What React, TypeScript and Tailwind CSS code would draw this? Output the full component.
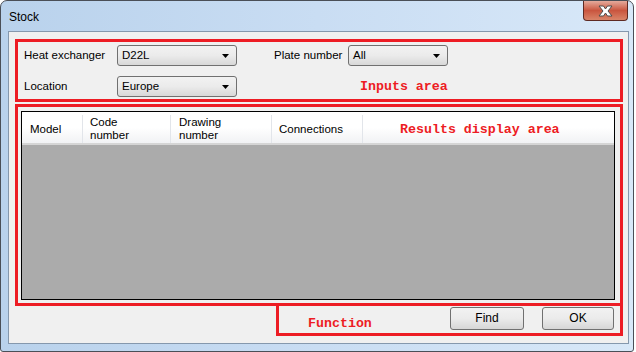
const ui = { fontFamily: '"Liberation Sans", Arial, sans-serif' }
const mono = { fontFamily: '"Liberation Mono", "Courier New", monospace' }

function Combo({ value, width }: { value: string; width: string }) {
  return (
    <div
      className={`${width} h-[21px] flex items-center justify-between rounded-[3px] border border-[#707070] bg-gradient-to-b from-[#f2f2f2] via-[#ebebeb] to-[#d8d8d8] pl-[4px] pr-[7px] text-[11.5px] text-black`}
    >
      <span>{value}</span>
      <svg width="7" height="4" viewBox="0 0 7 4">
        <path d="M0 0h7L3.5 4z" fill="#000" />
      </svg>
    </div>
  )
}

function Btn({ label, width }: { label: string; width: string }) {
  return (
    <div
      className={`${width} h-[23px] flex items-center justify-center pb-[2px] rounded-[3px] border border-[#707070] bg-gradient-to-b from-[#f2f2f2] via-[#ebebeb] to-[#d6d6d6] text-[12px] text-black`}
    >
      {label}
    </div>
  )
}

export default function App() {
  return (
    <div className="w-[636px] h-[352px] bg-white" style={ui}>
      <div className="w-[634px] h-[352px] flex flex-col rounded-t-[7px] rounded-b-[3px] border border-[#4a4f57] bg-gradient-to-r from-[#b9d2ec] via-[#c9ddf3] to-[#d8e8f8]">
        {/* title bar */}
        <div className="h-[30px] flex justify-between flex-none">
          <span className="pl-[8px] pt-[10px] text-[12px] text-black leading-none">Stock</span>
          <div className="mr-[5px] w-[45px] h-[20px] flex items-center justify-center rounded-b-[4px] border border-t-0 border-[#5e2a23] bg-gradient-to-b from-[#e4aa9c] via-[#c9553f] to-[#d98469]">
            <svg width="17" height="12" viewBox="0 0 17 12">
              <path
                d="M2 1h4.5l2 3 2-3H15l-4 5 4 5h-4.5l-2-3-2 3H2l4-5z"
                fill="#fff"
                stroke="#4c4c4c"
                strokeWidth="1"
                strokeLinejoin="round"
              />
            </svg>
          </div>
        </div>

        {/* client area */}
        <div className="flex-1 ml-[7px] mr-[4px] mb-[7px] border border-[#8598ad] bg-[#f0f0f0] pl-[6px] pr-[5px] pt-[7px] flex flex-col">
          {/* inputs area */}
          <div className="h-[63px] border-[3px] border-[#ed1c24] pl-[6px] pt-[3px] flex flex-col gap-[10px] text-[11.5px] text-black">
            <div className="flex items-center">
              <span className="w-[93px]">Heat exchanger</span>
              <Combo value="D22L" width="w-[120px]" />
              <span className="ml-[37px] w-[74px]">Plate number</span>
              <Combo value="All" width="w-[100px]" />
            </div>
            <div className="flex items-center">
              <span className="w-[93px]">Location</span>
              <Combo value="Europe" width="w-[120px]" />
              <span className="ml-[123px] text-[13.3px] font-bold text-[#ed1c24]" style={mono}>
                Inputs area
              </span>
            </div>
          </div>

          {/* results area */}
          <div className="mt-[2px] h-[202px] border-[3px] border-[#ed1c24] pl-[3px] pt-[4px] pr-[5px] pb-[3px] flex">
            <div className="flex-1 flex flex-col border border-black bg-[#ababab]">
              <div className="h-[33px] pt-[3px] flex border-b-2 border-[#d5d5d5] bg-gradient-to-b from-white via-white to-[#f1f2f4] text-[11.5px] text-black leading-[13px]">
                <div className="w-[61px] flex items-center pl-[8px] border-r border-[#e2e5ea]">Model</div>
                <div className="w-[88px] flex flex-col justify-center pl-[7px] border-r border-[#e2e5ea]">
                  <span>Code</span>
                  <span>number</span>
                </div>
                <div className="w-[101px] flex flex-col justify-center pl-[8px] border-r border-[#e2e5ea]">
                  <span>Drawing</span>
                  <span>number</span>
                </div>
                <div className="w-[91px] flex items-center pl-[7px] border-r border-[#e2e5ea]">Connections</div>
                <div className="flex-1 flex items-center pl-[37px]">
                  <span className="text-[13.3px] font-bold text-[#ed1c24]" style={mono}>
                    Results display area
                  </span>
                </div>
              </div>
            </div>
          </div>

          {/* function area */}
          <div className="-mt-[3px] ml-[261px] h-[33px] border-[3px] border-[#ed1c24] flex items-start pr-[6px]">
            <span className="mt-[8px] ml-[29px] text-[13.3px] font-bold text-[#ed1c24]" style={mono}>
              Function
            </span>
            <div className="ml-auto mt-[1px] flex gap-[18px]">
              <Btn label="Find" width="w-[74px]" />
              <Btn label="OK" width="w-[72px]" />
            </div>
          </div>
        </div>
      </div>
    </div>
  )
}
